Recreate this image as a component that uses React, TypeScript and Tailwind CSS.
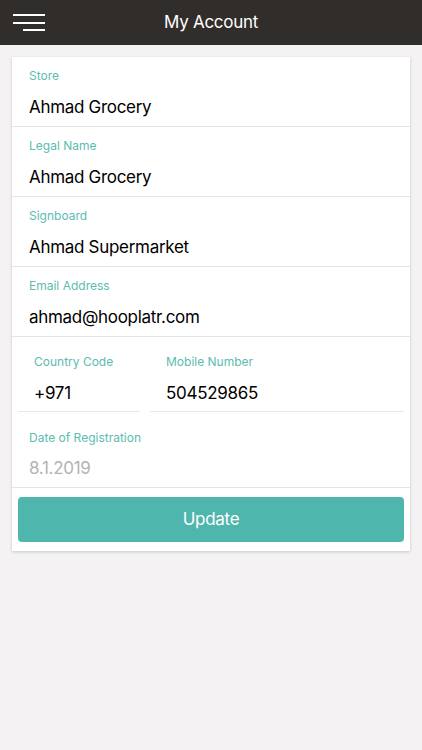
const fields = [
  { label: "Store", value: "Ahmad Grocery" },
  { label: "Legal Name", value: "Ahmad Grocery" },
  { label: "Signboard", value: "Ahmad Supermarket" },
  { label: "Email Address", value: "ahmad@hooplatr.com" },
];

function MenuIcon() {
  return (
    <div className="flex w-[32px] flex-col items-end gap-[5.5px]">
      <span className="block h-[2px] w-[32px] bg-white" />
      <span className="block h-[2px] w-[32px] bg-white" />
      <span className="block h-[2px] w-[22px] bg-white" />
    </div>
  );
}

export default function App() {
  return (
    <div
      className="min-h-[750px] bg-[#f4f2f2]"
      style={{ fontFamily: 'Inter, "Liberation Sans", sans-serif' }}
    >
      <header className="relative flex h-[45px] items-center justify-center bg-[#302d2a]">
        <div className="absolute left-[13px] top-[14px]">
          <MenuIcon />
        </div>
        <h1 className="pt-[1px] text-[17px] tracking-[-0.3px] text-white">My Account</h1>
      </header>

      <div className="mx-3 mt-3 bg-white shadow-[0_1px_3px_rgba(0,0,0,0.18)]">
        {fields.map((f) => (
          <div key={f.label} className="border-b border-[#e4e4e4] px-[17px] pt-[11px] pb-[8px]">
            <p className="text-[12px] leading-[16px] text-[#5cbcb0]">{f.label}</p>
            <p className="mt-[12px] text-[17px] leading-[22px] tracking-[-0.3px] text-black">{f.value}</p>
          </div>
        ))}

        <div className="flex gap-[10px] px-[6px]">
          <div className="w-[122px] border-b border-[#e8e8e8] pl-[16px] pt-[17px] pb-[7px]">
            <p className="text-[12px] leading-[16px] text-[#5cbcb0]">Country Code</p>
            <p className="mt-[12px] text-[17px] leading-[22px] tracking-[-0.3px] text-black">+971</p>
          </div>
          <div className="flex-1 border-b border-[#e8e8e8] pl-[16px] pt-[17px] pb-[7px]">
            <p className="text-[12px] leading-[16px] text-[#5cbcb0]">Mobile Number</p>
            <p className="mt-[12px] text-[17px] leading-[22px] tracking-[-0.3px] text-black">504529865</p>
          </div>
        </div>

        <div className="border-b border-[#e4e4e4] px-[17px] pt-[18px] pb-[8px]">
          <p className="text-[12px] leading-[16px] text-[#5cbcb0]">Date of Registration</p>
          <p className="mt-[11px] text-[17px] leading-[22px] tracking-[-0.3px] text-[#b3b3b3]">8.1.2019</p>
        </div>

        <div className="px-[6px] pt-[9px] pb-[9px]">
          <button
            type="button"
            className="flex h-[45px] w-full items-center justify-center rounded-[4px] bg-[#4fb6ad] pt-[1px] text-[17px] tracking-[-0.3px] text-white"
          >
            Update
          </button>
        </div>
      </div>
    </div>
  );
}
